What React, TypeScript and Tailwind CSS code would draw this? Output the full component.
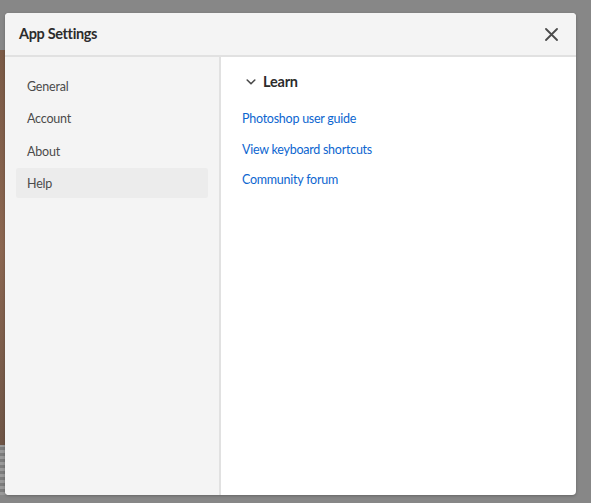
import React from "react";

const navItems = ["General", "Account", "About", "Help"];
const links = ["Photoshop user guide", "View keyboard shortcuts", "Community forum"];

const App = () => {
  const active = "Help";

  return (
    <div className="relative w-[591px] h-[503px] bg-[#878787] overflow-hidden font-['Lato',sans-serif]">
      {/* bits of the canvas peeking out behind the dialog */}
      <div className="absolute left-0 top-[50px] w-[6px] h-[395px] bg-gradient-to-b from-[#7a5a46] via-[#8b6650] to-[#6e5546]" />
      <div className="absolute left-0 top-[445px] w-[6px] h-[50px] bg-[repeating-linear-gradient(0deg,#9a9a9a_0px,#9a9a9a_3px,#7d7d7d_3px,#7d7d7d_6px)]" />

      <div className="relative ml-[5px] pt-[13px] w-[571px]">
        <div className="flex flex-col h-[482px] rounded-[4px] overflow-hidden bg-white shadow-[0_1px_3px_rgba(0,0,0,0.25)]">
          <div className="flex items-center justify-between h-[44px] shrink-0 bg-[#f4f4f4] border-b-2 border-[#e1e1e1] pl-[14px] pr-[15px]">
            <h1 className="text-[14.5px] tracking-[-0.35px] font-bold text-[#2c2c2c]">App Settings</h1>
            <button className="w-[20px] h-[20px] flex items-center justify-center text-[#4b4b4b]">
              <svg width="13" height="13" viewBox="0 0 13 13" fill="none">
                <path d="M1 1L12 12M12 1L1 12" stroke="currentColor" strokeWidth="1.8" strokeLinecap="round" />
              </svg>
            </button>
          </div>

          <div className="flex flex-1 min-h-0">
            <div className="w-[216px] shrink-0 bg-[#f4f4f4] border-r-2 border-[#e1e1e1] pt-[13px] px-[11px]">
              <div className="flex flex-col gap-[2.5px]">
                {navItems.map((item) => (
                  <div
                    key={item}
                    className={`h-[30px] flex items-center pt-[4px] pl-[11px] text-[12.5px] tracking-[-0.2px] text-[#4b4b4b] rounded-[2px] ${
                      item === active ? "bg-[#ececec]" : ""
                    }`}
                  >
                    {item}
                  </div>
                ))}
              </div>
            </div>

            <div className="flex-1 pt-[14px] pl-[21px]">
              <div className="flex items-center gap-[7px] h-[22px] pl-[4px]">
                <svg width="10" height="6" viewBox="0 0 10 6" fill="none" className="text-[#4b4b4b]">
                  <path d="M1.2 1L5 4.8L8.8 1" stroke="currentColor" strokeWidth="1.6" strokeLinecap="round" strokeLinejoin="round" />
                </svg>
                <span className="text-[14.5px] tracking-[-0.2px] font-bold text-[#2c2c2c]">Learn</span>
              </div>
              <div className="flex flex-col gap-[10.5px] mt-[16px]">
                {links.map((link) => (
                  <a key={link} href="#" className="text-[12.5px] tracking-[-0.25px] leading-[20px] text-[#0d66d0]">
                    {link}
                  </a>
                ))}
              </div>
            </div>
          </div>
        </div>
      </div>
    </div>
  );
};

export default App;
